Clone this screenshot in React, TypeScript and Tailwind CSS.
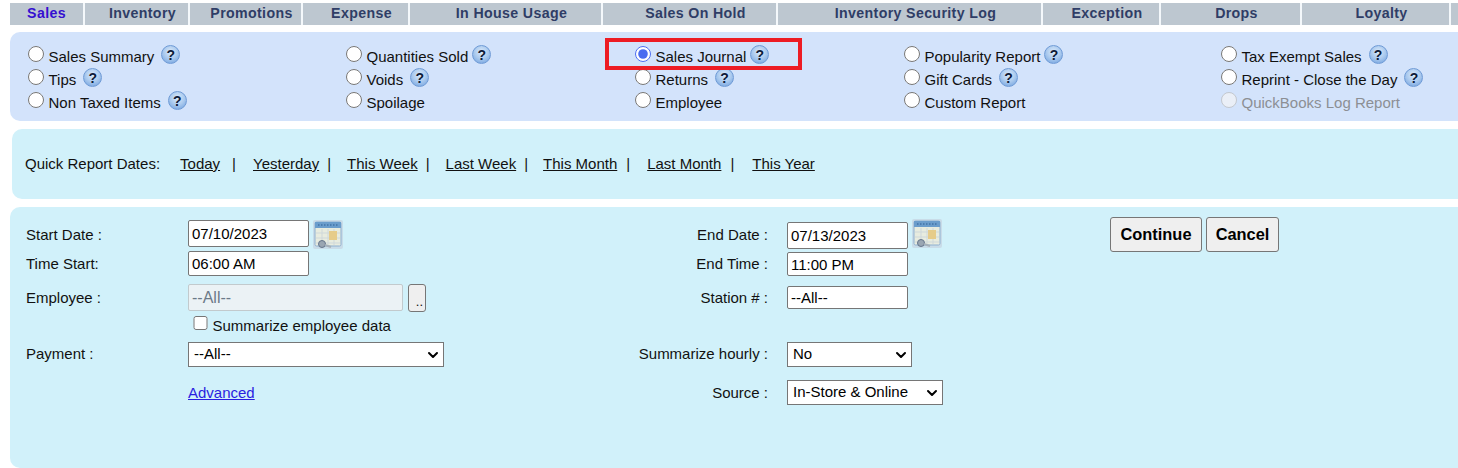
import { ChevronDown } from "lucide-react"

const tabs = [
  { label: 'Sales', width: 'w-[75px]', active: true },
  { label: 'Inventory', width: 'w-[105px]' },
  { label: 'Promotions', width: 'w-[113px]' },
  { label: 'Expense', width: 'w-[107px]' },
  { label: 'In House Usage', width: 'w-[193px]' },
  { label: 'Sales On Hold', width: 'w-[175px]' },
  { label: 'Inventory Security Log', width: 'w-[265px]' },
  { label: 'Exception', width: 'w-[118px]' },
  { label: 'Drops', width: 'w-[141px]' },
  { label: 'Loyalty', width: 'w-[149px]' },
]

type ReportOption = { label: string; help?: 'wide' | 'tight'; checked?: boolean; disabled?: boolean }

const reportColumns: { width: string; options: ReportOption[] }[] = [
  {
    width: 'w-[318px]',
    options: [
      { label: 'Sales Summary', help: 'wide' },
      { label: 'Tips', help: 'wide' },
      { label: 'Non Taxed Items', help: 'wide' },
    ],
  },
  {
    width: 'w-[289px]',
    options: [
      { label: 'Quantities Sold', help: 'tight' },
      { label: 'Voids', help: 'wide' },
      { label: 'Spoilage' },
    ],
  },
  {
    width: 'w-[269px]',
    options: [
      { label: 'Sales Journal', help: 'tight', checked: true },
      { label: 'Returns', help: 'wide' },
      { label: 'Employee' },
    ],
  },
  {
    width: 'w-[317px]',
    options: [
      { label: 'Popularity Report', help: 'tight' },
      { label: 'Gift Cards', help: 'wide' },
      { label: 'Custom Report' },
    ],
  },
  {
    width: 'w-[230px]',
    options: [
      { label: 'Tax Exempt Sales', help: 'wide' },
      { label: 'Reprint - Close the Day', help: 'wide' },
      { label: 'QuickBooks Log Report', disabled: true },
    ],
  },
]

const quickDates = [
  { label: 'Today', link: 'ml-[20px]', pipe: 'ml-[12px]' },
  { label: 'Yesterday', link: 'ml-[17px]', pipe: 'ml-[8px]' },
  { label: 'This Week', link: 'ml-[16px]', pipe: 'ml-[8px]' },
  { label: 'Last Week', link: 'ml-[16px]', pipe: 'ml-[8px]' },
  { label: 'This Month', link: 'ml-[15px]', pipe: 'ml-[9px]' },
  { label: 'Last Month', link: 'ml-[17px]', pipe: 'ml-[9px]' },
  { label: 'This Year', link: 'ml-[18px]' },
]

function HelpIcon({ className }: { className: string }) {
  return (
    <span
      className={`${className} mt-[-1px] flex h-[19px] w-[19px] shrink-0 items-center justify-center rounded-full border border-[#6f9bd6] bg-[radial-gradient(circle_at_50%_35%,#dcebfa_0%,#a9c9ee_50%,#6a9cdc_100%)] text-[14px] leading-none font-bold text-[#0d1a38]`}
    >
      ?
    </span>
  )
}

function CalendarIcon({ className = '' }: { className?: string }) {
  return (
    <svg viewBox="0 0 30 29" className={`h-[29px] w-[30px] shrink-0 blur-[0.4px] ${className}`}>
      <rect x="0" y="0" width="30" height="29" rx="2" fill="#c9dce8" />
      <rect x="2" y="2" width="26" height="24" rx="1.5" fill="#e8ecdf" stroke="#8fb0d0" />
      <rect x="2" y="2" width="26" height="6" fill="#6b9dcc" />
      <path d="M5 5h20" stroke="#2f5f94" strokeDasharray="1.5 1.5" />
      <path d="M3 13h24M3 18h24M3 23h24M9 9v16M15 9v16M21 9v16" stroke="#cfd8da" />
      <rect x="16" y="11" width="8" height="9" fill="#e6cc8a" />
      <circle cx="9" cy="24" r="3.5" fill="#9aa6b2" stroke="#66758a" />
      <path d="M12 25l6 2" stroke="#a6b0b8" strokeWidth="2" />
    </svg>
  )
}

function Select({ value, width }: { value: string; width: string }) {
  return (
    <div className={`relative h-[25px] ${width}`}>
      <select
        defaultValue={value}
        className="h-full w-full appearance-none rounded-none border border-[#767676] bg-white pl-[5px] text-[15px] text-black"
      >
        <option>{value}</option>
      </select>
      <ChevronDown size={16} strokeWidth={3} className="pointer-events-none absolute top-[5px] right-[3px] text-black" />
    </div>
  )
}

function TextField({ value, className }: { value: string; className: string }) {
  return (
    <input
      readOnly
      value={value}
      className={`${className} w-[121px] rounded-[2px] border border-[#767676] bg-white pl-[3px] text-[15px] text-black`}
    />
  )
}

export default function App() {
  return (
    <div className="relative h-[468px] w-[1458px] overflow-hidden bg-white pt-[3px] pl-[10px] font-['Liberation_Sans',Arial,sans-serif] text-[15px] text-[#111111]">
      {/* Top tabs */}
      <div className="flex h-[22px] w-[1448px] bg-[#bdc7d0]">
        {tabs.map((tab) => (
          <div
            key={tab.label}
            className={`${tab.width} flex shrink-0 items-center justify-center border-r-2 border-[#f4f8fb] text-[14.2px] font-bold tracking-[0.35px] ${tab.active ? 'text-[#3510d0]' : 'pl-[12px] text-[#2f3d66]'}`}
          >
            {tab.label}
          </div>
        ))}
      </div>

      {/* Report type */}
      <div className="mt-[7px] flex h-[89px] rounded-l-[10px] bg-[#d3e3fb] pt-[14px] pl-[18px]">
        {reportColumns.map((column) => (
          <div key={column.options[0].label} className={`${column.width} shrink-0`}>
            {column.options.map((option) => (
              <label key={option.label} className="flex h-[23px] items-start">
                <input
                  type="radio"
                  name="report"
                  defaultChecked={option.checked}
                  disabled={option.disabled}
                  className="h-[15.5px] w-[15.5px] shrink-0 accent-[#4a6cf0]"
                />
                <span className={`ml-[5px] leading-[22px] ${option.disabled ? 'text-[#8c8f94]' : ''}`}>
                  {option.label}
                </span>
                {option.help === 'wide' && <HelpIcon className="ml-[7px]" />}
                {option.help === 'tight' && <HelpIcon className="ml-[4px]" />}
              </label>
            ))}
          </div>
        ))}
      </div>

      {/* Quick dates */}
      <div className="mt-[8px] ml-[2px] flex h-[70px] items-center rounded-l-[10px] bg-[#d1f1fa] pl-[13px]">
        <span>Quick Report Dates:</span>
        {quickDates.map((item) => (
          <div key={item.label} className="flex">
            <a className={`${item.link} underline`}>{item.label}</a>
            {item.pipe && <span className={item.pipe}>|</span>}
          </div>
        ))}
      </div>

      {/* Filter form */}
      <div className="mt-[8px] flex h-[261px] rounded-l-[10px] bg-[#d1f1fa] pl-[16px]">
        <div className="w-[600px] shrink-0 pt-[13px]">
          <div className="flex h-[27px] items-start">
            <span className="w-[162px] pt-[4px]">Start Date :</span>
            <TextField value="07/10/2023" className="h-[27px]" />
            <CalendarIcon className="ml-[4px]" />
          </div>
          <div className="mt-[4px] flex h-[25px] items-center">
            <span className="w-[162px] pt-[2px]">Time Start:</span>
            <TextField value="06:00 AM" className="h-[25px]" />
          </div>
          <div className="mt-[8px] flex h-[27px] items-center">
            <span className="w-[162px] pt-[2px]">Employee :</span>
            <input
              readOnly
              value="--All--"
              className="h-[27px] w-[215px] rounded-[2px] border border-[#c2cacd] bg-[#ebf2f5] pl-[3px] text-[16px] text-[#6b7a88]"
            />
            <button className="ml-[5px] flex h-[28px] w-[18px] items-end justify-end rounded-[3px] border border-[#767676] bg-[#efefef] pr-[2px] pb-[3px] text-[13px] leading-none">
              ..
            </button>
          </div>
          <label className="mt-[3px] ml-[167px] flex h-[21px] items-center">
            <input type="checkbox" className="mt-[-3px] h-[14.5px] w-[14.5px]" />
            <span className="ml-[5px] pt-[3px]">Summarize employee data</span>
          </label>
          <div className="mt-[7px] flex h-[25px] items-center">
            <span className="w-[162px]">Payment :</span>
            <Select value="--All--" width="w-[256px]" />
          </div>
          <div className="mt-[15px] flex h-[22px] items-center pl-[162px]">
            <a className="text-[#2a1ee0] underline">Advanced</a>
          </div>
        </div>

        <div className="w-[484px] shrink-0 pt-[15px]">
          <div className="flex h-[27px] items-center">
            <span className="w-[142px] text-right">End Date :</span>
            <TextField value="07/13/2023" className="ml-[19px] h-[27px]" />
            <CalendarIcon className="mt-[-4px] ml-[4px]" />
          </div>
          <div className="mt-[3px] flex h-[24px] items-center">
            <span className="w-[142px] text-right">End Time :</span>
            <TextField value="11:00 PM" className="ml-[19px] h-[24px]" />
          </div>
          <div className="mt-[10px] flex h-[23px] items-center">
            <span className="w-[142px] pt-[2px] text-right">Station # :</span>
            <TextField value="--All--" className="ml-[19px] h-[23px]" />
          </div>
          <div className="mt-[33px] flex h-[25px] items-center">
            <span className="w-[142px] shrink-0 text-right whitespace-nowrap">Summarize hourly :</span>
            <div className="ml-[19px]">
              <Select value="No" width="w-[125px]" />
            </div>
          </div>
          <div className="mt-[13px] flex h-[25px] items-center">
            <span className="w-[142px] pt-[2px] text-right">Source :</span>
            <div className="ml-[19px]">
              <Select value="In-Store & Online" width="w-[156px]" />
            </div>
          </div>
        </div>

        <div className="flex items-start gap-[4px] pt-[10px]">
          <button className="h-[35px] w-[92px] rounded-[3px] border border-[#767676] bg-[#efefef] text-[16.4px] font-bold text-black">
            Continue
          </button>
          <button className="h-[35px] w-[73px] rounded-[3px] border border-[#767676] bg-[#efefef] text-[16.4px] font-bold text-black">
            Cancel
          </button>
        </div>
      </div>

      {/* Highlight drawn over the selected report */}
      <div className="absolute top-[38px] left-[605px] h-[32px] w-[197px] border-[4px] border-[#ed1c24]" />
    </div>
  )
}
